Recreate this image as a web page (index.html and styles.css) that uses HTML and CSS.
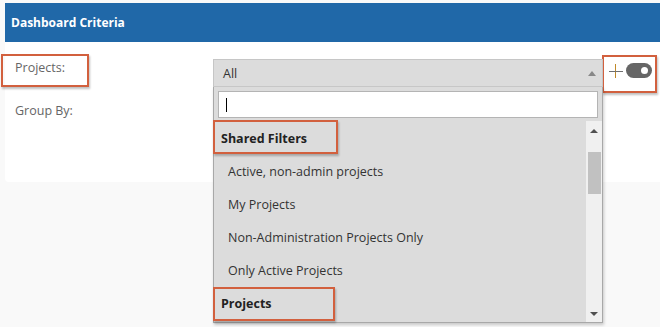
FILE: index.html
```html
<!DOCTYPE html>
<html>
<head>
	<meta charset="utf-8">
	<title>Dashboard Criteria</title>
	<link rel="stylesheet" href="styles.css">
</head>
<body>
	<div class="card">
		<div class="card-head">Dashboard Criteria</div>
		<div class="card-body">
			<div class="row">
				<label class="field-label">Projects:<span class="mark mark-label"></span></label>
				<div class="select-wrap">
					<div class="select">
						<span>All</span>
						<span class="arrow-up"></span>
					</div>
					<div class="dropdown">
						<div class="search"><input type="text" value=""><span class="caret"></span></div>
						<div class="list">
							<ul class="options">
								<li class="group">Shared Filters<span class="mark mark-group"></span></li>
								<li>Active, non-admin projects</li>
								<li>My Projects</li>
								<li>Non-Administration Projects Only</li>
								<li>Only Active Projects</li>
								<li class="group">Projects<span class="mark mark-group2"></span></li>
							</ul>
							<div class="scrollbar">
								<span class="sb-up"></span>
								<span class="sb-thumb"></span>
								<span class="sb-down"></span>
							</div>
						</div>
					</div>
				</div>
				<div class="tools">
					<span class="plus"></span>
					<span class="toggle"></span>
					<span class="mark mark-tools"></span>
				</div>
			</div>
			<div class="row row-group">
				<label class="field-label">Group By:</label>
			</div>
		</div>
	</div>
</body>
</html>
```

FILE: styles.css
```css
html {
	min-height: 100%;
	background: #f9f9f9;
}

body {
	margin: 0;
	min-height: 100vh;
	background: #f9f9f9;
	font-family: "Open Sans", "Noto Sans", sans-serif;
	font-size: 12px;
	color: #333;
}

.card {
	margin: 3px 0 0 5px;
	height: 179px;
	background: #fff;
	border-bottom-left-radius: 4px;
}

.card-head {
	height: 39px;
	line-height: 39px;
	padding-left: 6px;
	background: #2068a8;
	color: #fff;
	font-weight: bold;
	font-size: 12px;
}

.card-body {
	padding: 16px 0 0 10px;
}

.row {
	display: flex;
	align-items: flex-start;
}

.field-label {
	position: relative;
	width: 198px;
	color: #666;
	font-size: 12.5px;
	line-height: 20px;
}

.row-group {
	margin-top: 14px;
}

.mark {
	position: absolute;
	border: 2px solid #d2603e;
	box-shadow: 1px 2px 2px rgba(0, 0, 0, 0.25);
	pointer-events: none;
}

.mark-label {
	left: -14px;
	top: -4px;
	width: 84px;
	height: 29px;
}

.select-wrap {
	position: relative;
	z-index: 5;
	width: 390px;
	margin-top: 1px;
}

.select {
	height: 26px;
	display: flex;
	align-items: center;
	justify-content: space-between;
	padding: 0 6px 0 9px;
	background: #dcdcdc;
	border: 1px solid #c6c6c6;
	border-bottom-color: #c9c9c9;
	color: #333;
	font-size: 12.5px;
}

.arrow-up {
	width: 0;
	height: 0;
	border-left: 4px solid transparent;
	border-right: 4px solid transparent;
	border-bottom: 5px solid #888;
	margin-top: 1px;
}

.dropdown {
	position: absolute;
	left: 0;
	top: 28px;
	width: 388px;
	height: 235px;
	background: #dcdcdc;
	border-left: 1px solid #a8a8a8;
	border-right: 1px solid #a8a8a8;
	border-bottom: 1px solid #a8a8a8;
	box-shadow: 1px 2px 3px rgba(0, 0, 0, 0.2);
}

.search {
	position: relative;
	margin: 4px 4px 0 4px;
}

.search input {
	display: block;
	box-sizing: border-box;
	width: 380px;
	height: 27px;
	border: 1px solid #b4b4b4;
	background: #fff;
	padding: 0 6px;
	outline: none;
}

.caret {
	position: absolute;
	left: 8px;
	top: 7px;
	width: 1px;
	height: 14px;
	background: #000;
}

.list {
	display: flex;
	margin-top: 3px;
	height: 201px;
}

.options {
	flex: 1;
	list-style: none;
	margin: 0;
	padding: 1px 0 0 0;
}

.options li {
	position: relative;
	height: 33px;
	line-height: 33px;
	padding-left: 14px;
	font-size: 12.5px;
	color: #333;
}

.options li.group {
	padding-left: 7px;
	font-weight: bold;
	color: #222;
}

.mark-group {
	left: -1px;
	top: -2px;
	width: 121px;
	height: 30px;
}

.mark-group2 {
	left: -1px;
	top: 0;
	width: 118px;
	height: 30px;
}

.scrollbar {
	position: relative;
	width: 16px;
	background: #f0f0f0;
}

.sb-up, .sb-down {
	position: absolute;
	left: 4px;
	width: 0;
	height: 0;
	border-left: 4px solid transparent;
	border-right: 4px solid transparent;
}

.sb-up {
	top: 8px;
	border-bottom: 4px solid #505050;
}

.sb-down {
	bottom: 6px;
	border-top: 4px solid #505050;
}

.sb-thumb {
	position: absolute;
	left: 2px;
	top: 31px;
	width: 13px;
	height: 42px;
	background: #c1c1c1;
}

.tools {
	position: relative;
	display: flex;
	align-items: center;
	gap: 3px;
	margin: 5px 0 0 6px;
}

.plus {
	position: relative;
	width: 14px;
	height: 14px;
}

.plus::before, .plus::after {
	content: "";
	position: absolute;
}

.plus::before {
	left: 6px;
	top: 0;
	width: 1px;
	height: 14px;
	background: #c08a2a;
}

.plus::after {
	left: 0;
	top: 7px;
	width: 14px;
	height: 1px;
	background: #6f6f6f;
}

.toggle {
	position: relative;
	width: 26px;
	height: 15px;
	border-radius: 8px;
	background: #666;
}

.toggle::after {
	content: "";
	position: absolute;
	right: 4px;
	top: 4px;
	width: 7px;
	height: 7px;
	border-radius: 50%;
	background: #fff;
}

.mark-tools {
	left: -7px;
	top: -8px;
	width: 51px;
	height: 34px;
}
```
